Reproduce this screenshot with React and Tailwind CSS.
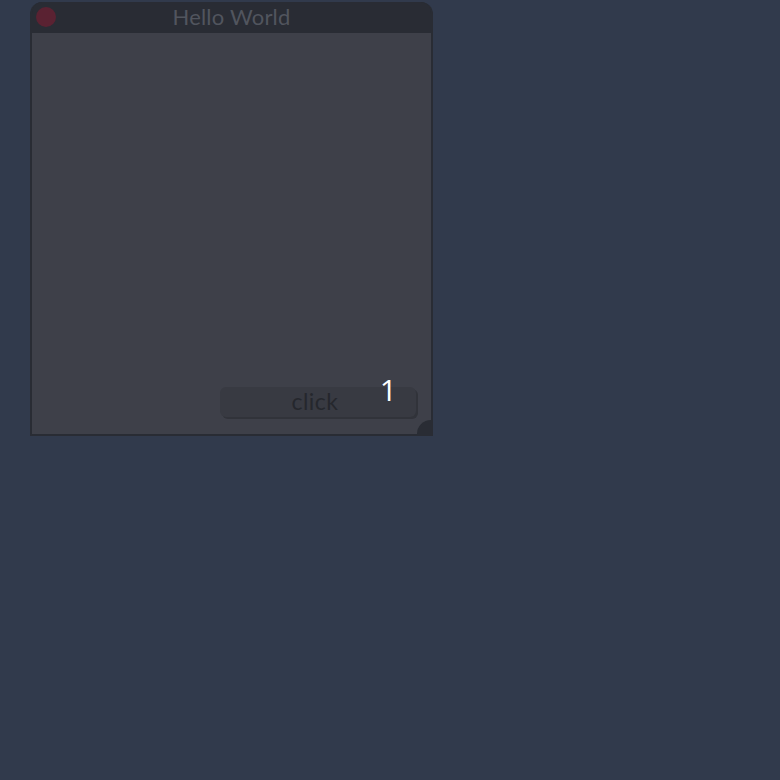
import React, { useState } from 'react';

const App = () => {
    const [count, setCount] = useState(1);

    return (
        <div className="w-[780px] h-[780px] bg-[#313a4c] pt-[2px] pl-[30px]" style={{ fontFamily: 'Lato, "Open Sans", sans-serif' }}>
            <div className="relative w-[403px] h-[434px] flex flex-col rounded-t-[12px] overflow-hidden bg-[#292c34] border-2 border-t-0 border-[#292c34]">
                <div className="h-[31px] shrink-0 relative flex items-center justify-center bg-[#292c34]">
                    <div className="absolute left-[4px] top-[5px] w-[20px] h-[20px] rounded-full bg-[#5a2232]" />
                    <span className="text-[22px] leading-none tracking-[0.2px] text-[#51555e] pb-[1px]">Hello World</span>
                </div>
                <div className="flex-1 flex flex-col justify-end items-end bg-[#3e4049] pr-[15px] pb-[17px]">
                    <div className="relative">
                        <button
                            onClick={() => setCount(count + 1)}
                            className="w-[196px] h-[30px] flex items-center justify-center rounded-[6px] bg-[#383a42] shadow-[2px_2px_0_#31333a] text-[23px] leading-none tracking-[0.5px] text-[#25272d] pr-[6px] pb-[1px]"
                        >
                            click
                        </button>
                        <span className="absolute right-[19px] top-[-12px] text-[30px] leading-none text-white" style={{ fontFamily: '"Open Sans", sans-serif' }}>{count}</span>
                    </div>
                </div>
                <div className="absolute right-0 bottom-0 w-[14px] h-[14px] rounded-tl-full bg-[#292c34]" />
            </div>
        </div>
    );
};

export default App;
